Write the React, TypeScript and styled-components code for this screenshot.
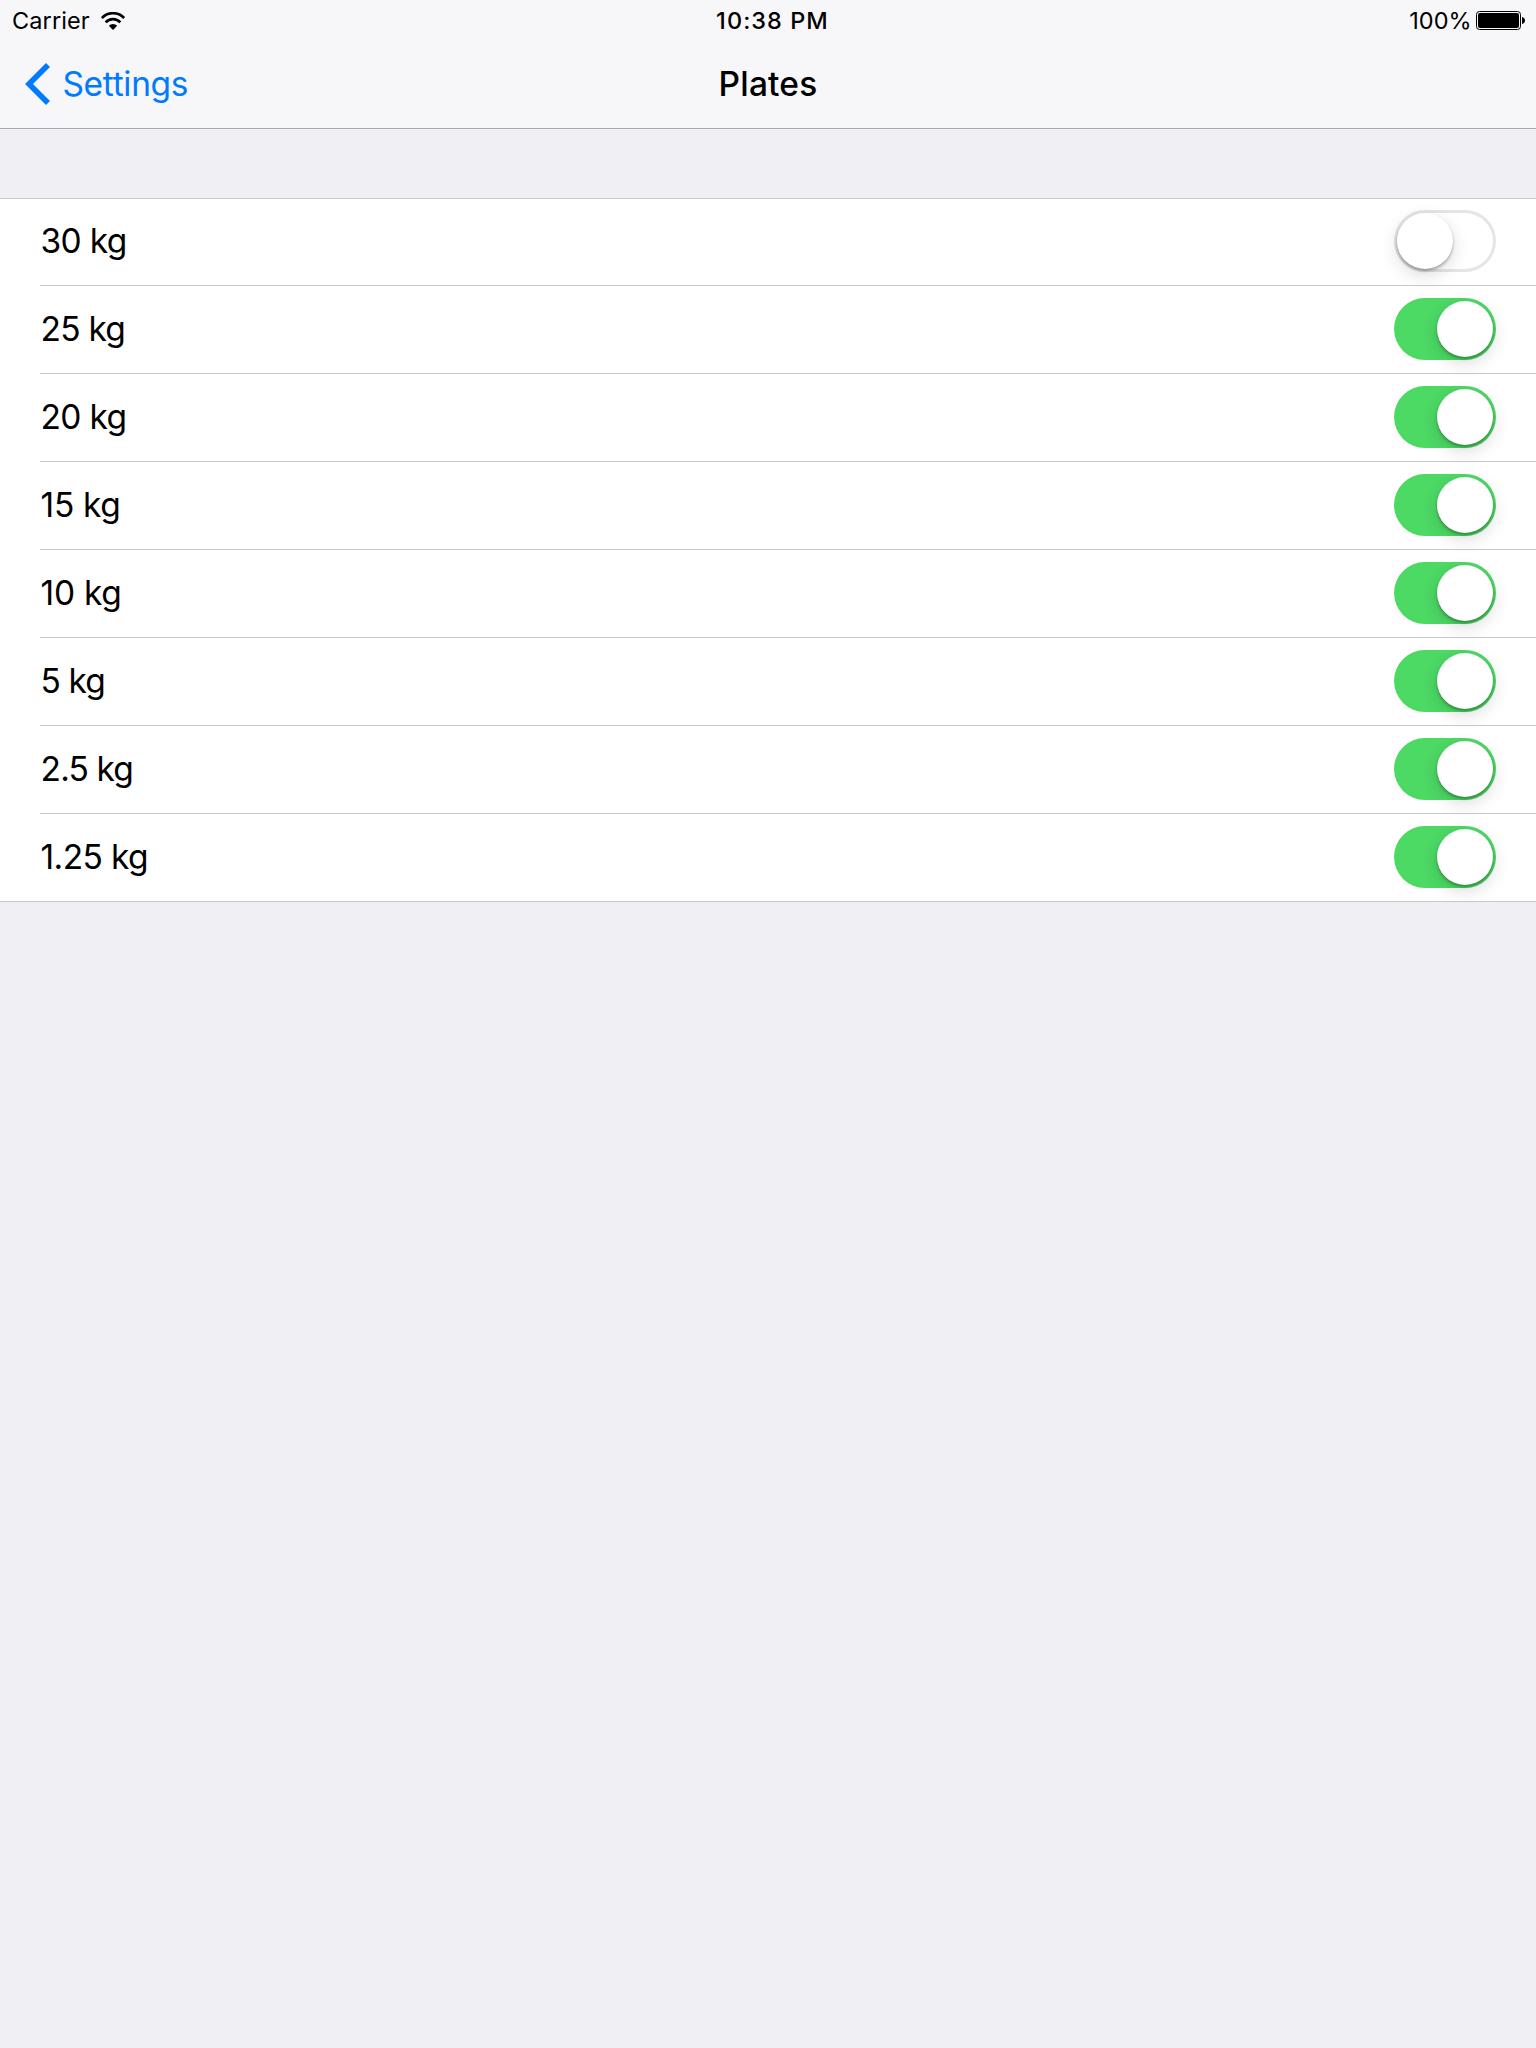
import React, { useState } from "react";
import styled, { createGlobalStyle } from "styled-components";

const Global = createGlobalStyle`
  * { box-sizing: border-box; }
  html, body { margin: 0; padding: 0; background: #efeff4; }
  body { font-family: Inter, "Liberation Sans", sans-serif; color: #000; }
`;

const Screen = styled.div`
  display: flex;
  flex-direction: column;
  width: 1536px;
  min-height: 2048px;
  background: #efeff4;
`;

const Header = styled.header`
  height: 129px;
  background: #f7f7f9;
  border-bottom: 1px solid #a9a9ae;
`;

const ThreeColumns = styled.div`
  display: grid;
  grid-template-columns: 1fr auto 1fr;
  align-items: center;
`;

const StatusBar = styled(ThreeColumns)`
  height: 41px;
  padding: 0 11px 0 12px;
  font-size: 23.5px;
  line-height: 41px;
`;

const NavBar = styled(ThreeColumns)`
  height: 87px;
  padding: 0 25px 1px;
  font-size: 33.5px;
  line-height: 86px;
`;

const Side = styled.div<{ $end?: boolean; $gap: number }>`
  display: flex;
  align-items: center;
  justify-content: ${(p) => (p.$end ? "flex-end" : "flex-start")};
  gap: ${(p) => p.$gap}px;
`;

const Label = styled.span<{ $spacing: number; $strong?: boolean }>`
  letter-spacing: ${(p) => p.$spacing}px;
  font-weight: ${(p) => (p.$strong ? 500 : 400)};
  white-space: pre;
`;

const Clock = styled(Label)`
  padding-left: 8px;
`;

const Back = styled.a`
  display: flex;
  align-items: center;
  gap: 11.4px;
  color: #007aff;
  text-decoration: none;
`;

const List = styled.ul`
  margin: 69px 0 0;
  padding: 0;
  list-style: none;
  background: #fff;
  box-shadow: inset 0 1px #c8c7cc;
`;

const RowBody = styled.div`
  display: flex;
  align-items: center;
  justify-content: space-between;
  height: 88px;
  padding: 0 40px 1px 0.6px;
  border-bottom: 1px solid #c8c7cc;
  font-size: 33.5px;
  line-height: 86px;
`;

const Row = styled.li`
  height: 88px;
  padding-left: 40px;

  &:last-child {
    padding-left: 0;
  }

  &:last-child ${RowBody} {
    padding-left: 40.6px;
  }
`;

const Track = styled.button<{ $on: boolean }>`
  display: flex;
  justify-content: ${(p) => (p.$on ? "flex-end" : "flex-start")};
  width: 102px;
  height: 62px;
  margin: 0;
  padding: 3px;
  border: 0;
  border-radius: 31px;
  background: ${(p) => (p.$on ? "#4cd964" : "#fff")};
  box-shadow: ${(p) => (p.$on ? "none" : "inset 0 0 0 3px #e5e5e5")};
`;

const Knob = styled.span`
  width: 56px;
  height: 56px;
  border-radius: 50%;
  background: #fff;
  box-shadow: 0 6px 18px rgba(0, 0, 0, 0.14), 0 2px 3px rgba(0, 0, 0, 0.3);
`;

const plates = [
  { label: "30 kg", on: false, spacing: -0.7 },
  { label: "25 kg", on: true, spacing: -0.77 },
  { label: "20 kg", on: true, spacing: -0.66 },
  { label: "15 kg", on: true, spacing: -0.32 },
  { label: "10 kg", on: true, spacing: -0.26 },
  { label: "5 kg", on: true, spacing: -0.88 },
  { label: "2.5 kg", on: true, spacing: -0.85 },
  { label: "1.25 kg", on: true, spacing: -0.62 },
];

const Wifi = () => (
  <svg width="24" height="18" viewBox="0 0 24 18" fill="none" stroke="#000" strokeWidth="2.7">
    <path d="M0.900 6A15.300 15.300 0 0 1 23.100 6" />
    <path d="M4.700 10.300A10 10 0 0 1 19.300 10.300" />
    <path d="M12 18L7.800 13.800A5.900 5.900 0 0 1 16.200 13.800Z" fill="#000" stroke="none" />
  </svg>
);

const Battery = () => (
  <svg width="49" height="19" viewBox="0 0 49 19">
    <rect x="0.5" y="0.5" width="44" height="18" rx="3" fill="none" stroke="#000" />
    <rect x="2" y="2" width="41" height="15" rx="2" fill="#000" />
    <path d="M46 6c1.8.3 3 1.7 3 3.500s-1.200 3.200-3 3.500z" fill="#000" />
  </svg>
);

const Chevron = () => (
  <svg width="26" height="42" viewBox="0 0 26 42" fill="none" stroke="#007aff" strokeWidth="5.6">
    <path d="M23 2L4 21L23 40" />
  </svg>
);

function Switch({ initial, label }: { initial: boolean; label: string }) {
  const [on, setOn] = useState(initial);
  return (
    <Track $on={on} role="switch" aria-checked={on} aria-label={label} onClick={() => setOn(!on)}>
      <Knob />
    </Track>
  );
}

export default function App() {
  return (
    <Screen>
      <Global />
      <Header>
        <StatusBar>
          <Side $gap={11}>
            <Label $spacing={0.1}>Carrier</Label>
            <Wifi />
          </Side>
          <Clock $spacing={1.05} $strong>10:38 PM</Clock>
          <Side $end $gap={4.4}>
            <Label $spacing={0}>100%</Label>
            <Battery />
          </Side>
        </StatusBar>
        <NavBar>
          <Side $gap={0}>
            <Back>
              <Chevron />
              <Label $spacing={-0.3}>Settings</Label>
            </Back>
          </Side>
          <Label $spacing={0.17} $strong>Plates</Label>
          <Side $end $gap={0} />
        </NavBar>
      </Header>
      <List>
        {plates.map((p) => (
          <Row key={p.label}>
            <RowBody>
              <Label $spacing={p.spacing}>{p.label}</Label>
              <Switch initial={p.on} label={p.label} />
            </RowBody>
          </Row>
        ))}
      </List>
    </Screen>
  );
}
